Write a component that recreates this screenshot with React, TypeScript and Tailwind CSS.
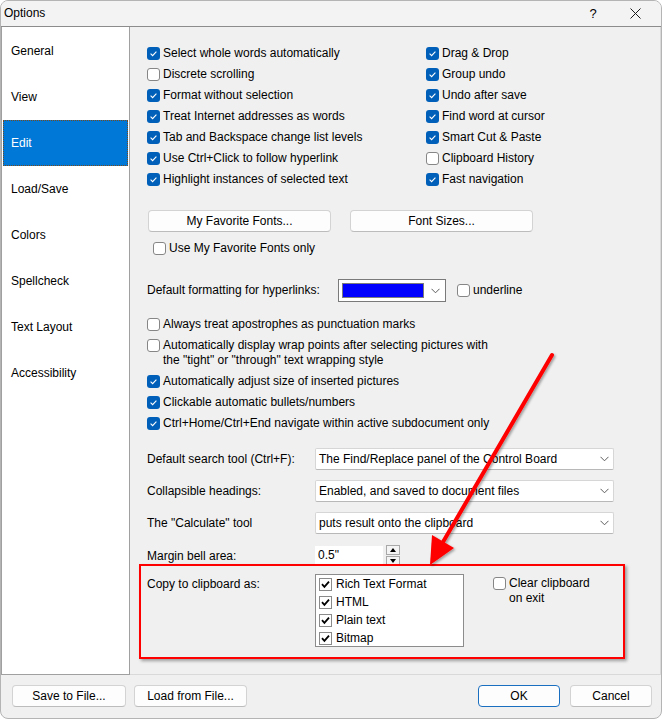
import React from 'react';

const LEFT_OPTS = [
  { label: 'Select whole words automatically', on: true },
  { label: 'Discrete scrolling', on: false },
  { label: 'Format without selection', on: true },
  { label: 'Treat Internet addresses as words', on: true },
  { label: 'Tab and Backspace change list levels', on: true },
  { label: 'Use Ctrl+Click to follow hyperlink', on: true },
  { label: 'Highlight instances of selected text', on: true },
];

const RIGHT_OPTS = [
  { label: 'Drag & Drop', on: true },
  { label: 'Group undo', on: true },
  { label: 'Undo after save', on: true },
  { label: 'Find word at cursor', on: true },
  { label: 'Smart Cut & Paste', on: true },
  { label: 'Clipboard History', on: false },
  { label: 'Fast navigation', on: true },
];

const NAV = ['General', 'View', 'Edit', 'Load/Save', 'Colors', 'Spellcheck', 'Text Layout', 'Accessibility'];

const CLIP_FORMATS = ['Rich Text Format', 'HTML', 'Plain text', 'Bitmap'];

// Windows 11 style checkbox
function Box({ on }: { on: boolean }) {
  if (on) {
    return (
      <span className="w-[13px] h-[13px] rounded-[3px] bg-[#005fb8] flex items-center justify-center shrink-0">
        <svg width="9" height="9" viewBox="0 0 9 9">
          <path d="M1.6 4.7 L3.6 6.6 L7.4 2.6" stroke="white" strokeWidth="1.1" fill="none" />
        </svg>
      </span>
    );
  }
  return <span className="block w-[13px] h-[13px] rounded-[3px] bg-white border border-[#868686] shrink-0" />;
}

// classic checkbox used in the list box
function ClassicBox() {
  return (
    <span className="w-[13px] h-[13px] bg-white border border-[#8a8a8a] flex items-center justify-center shrink-0">
      <svg width="9" height="9" viewBox="0 0 9 9">
        <path d="M1 4.2 L3.4 6.8 L8 1.6" stroke="black" strokeWidth="1.8" fill="none" />
      </svg>
    </span>
  );
}

function Option({ label, on }: { label: string; on: boolean }) {
  return (
    <div className="h-[21px] flex items-center gap-[3px]">
      <Box on={on} />
      <span className="whitespace-nowrap">{label}</span>
    </div>
  );
}

function Chevron() {
  return (
    <svg width="9" height="6" viewBox="0 0 9 6" className="shrink-0">
      <path d="M0.5 0.8 L4.5 4.8 L8.5 0.8" stroke="#5c5c5c" strokeWidth="1" fill="none" />
    </svg>
  );
}

function Combo({ value }: { value: string }) {
  return (
    <div className="w-[299px] h-[22px] bg-white border border-[#d6d6d6] border-b-[#b8b8b8] rounded-[2px] flex items-center pl-[3px] pr-[4px]">
      <span className="flex-1 whitespace-nowrap">{value}</span>
      <Chevron />
    </div>
  );
}

function Btn({ label, w, primary }: { label: string; w: string; primary?: boolean }) {
  return (
    <div
      className={`${w} h-[22px] rounded-[4px] bg-[#fdfdfd] flex items-center justify-center border ${
        primary ? 'border-[#1a6fc0]' : 'border-[#d3d3d3] border-b-[#bcbcbc]'
      }`}
    >
      {label}
    </div>
  );
}

function Arrow() {
  return (
    <svg className="absolute left-0 top-0 pointer-events-none" width="662" height="719" viewBox="0 0 662 719">
      <defs>
        <filter id="sh" x="-20%" y="-20%" width="140%" height="140%">
          <feDropShadow dx="1.5" dy="1.5" stdDeviation="1.2" floodColor="#000" floodOpacity="0.35" />
        </filter>
      </defs>
      <g filter="url(#sh)">
        <line x1="551" y1="354" x2="442" y2="541" stroke="#ff0000" strokeWidth="4" strokeLinecap="round" />
        <polygon points="429,564 453,547 431,534" fill="#ff0000" />
      </g>
    </svg>
  );
}

export default function App() {
  return (
    <div
      className="w-[662px] h-[719px] bg-[#f0f0f0] border border-[#b4b4b4] rounded-[8px] overflow-hidden relative flex flex-col text-[12px] text-black leading-[15px]"
      style={{ fontFamily: '"Liberation Sans", Arial, sans-serif' }}
    >
      {/* Title bar */}
      <div className="h-[26px] shrink-0 flex items-center pl-[3px] border-b border-[#8c8c8c] bg-[#f3f3f3]">
        <span className="flex-1">Options</span>
        <span className="w-[20px] text-center mr-[22px] text-[13px]">?</span>
        <span className="w-[20px] flex justify-center mr-[16px]">
          <svg width="11" height="11" viewBox="0 0 11 11">
            <path d="M0.5 0.5 L10.5 10.5 M10.5 0.5 L0.5 10.5" stroke="#1a1a1a" strokeWidth="1" />
          </svg>
        </span>
      </div>

      {/* Body */}
      <div className="h-[648px] shrink-0 flex">
        {/* Sidebar */}
        <div className="w-[129px] shrink-0 bg-white border-l border-r border-b border-[#a0a0a0] pt-[1px] px-[1px]">
          {NAV.map(n => (
            <div
              key={n}
              className={`h-[46px] flex items-center pl-[8px] ${
                n === 'Edit' ? 'bg-[#0078d7] text-white outline outline-1 outline-dotted outline-[#7a4a1a] -outline-offset-1' : ''
              }`}
            >
              {n}
            </div>
          ))}
        </div>

        {/* Edit page */}
        <div className="flex-1 border-r border-b border-[#d9d9d9] pl-[17px] pt-[16px] flex flex-col">
          <div className="grid grid-cols-[279px_1fr]">
            <div className="flex flex-col">
              {LEFT_OPTS.map(o => (
                <Option key={o.label} {...o} />
              ))}
            </div>
            <div className="flex flex-col">
              {RIGHT_OPTS.map(o => (
                <Option key={o.label} {...o} />
              ))}
            </div>
          </div>

          <div className="flex gap-[19px] mt-[20px] ml-[1px]">
            <Btn label="My Favorite Fonts..." w="w-[183px]" />
            <Btn label="Font Sizes..." w="w-[183px]" />
          </div>
          <div className="h-[20px] mt-[6px] ml-[6px] flex items-center gap-[3px]">
            <Box on={false} />
            <span>Use My Favorite Fonts only</span>
          </div>

          <div className="h-[23px] mt-[21px] flex items-center">
            <span className="w-[191px]">Default formatting for hyperlinks:</span>
            <div className="w-[108px] h-[23px] bg-white border border-[#7a7a7a] flex items-center pl-[3px] pr-[5px] gap-[7px]">
              <span className="w-[82px] h-[15px] bg-[#0000ff] border border-[#7c7c7c]" />
              <Chevron />
            </div>
            <div className="ml-[11px] flex items-center gap-[3px]">
              <Box on={false} />
              <span>underline</span>
            </div>
          </div>

          <div className="mt-[12px] flex flex-col">
            <Option label="Always treat apostrophes as punctuation marks" on={false} />
            <div className="flex gap-[3px] pt-[3px] h-[36px]">
              <div className="mt-[1px]">
                <Box on={false} />
              </div>
              <span>
                Automatically display wrap points after selecting pictures with
                <br />
                the "tight" or "through" text wrapping style
              </span>
            </div>
            <Option label="Automatically adjust size of inserted pictures" on />
            <Option label="Clickable automatic bullets/numbers" on />
            <Option label="Ctrl+Home/Ctrl+End navigate within active subdocument only" on />
          </div>

          <div className="mt-[14px] flex items-center">
            <span className="w-[168px]">Default search tool (Ctrl+F):</span>
            <Combo value="The Find/Replace panel of the Control Board" />
          </div>
          <div className="mt-[10px] flex items-center">
            <span className="w-[168px]">Collapsible headings:</span>
            <Combo value="Enabled, and saved to document files" />
          </div>
          <div className="mt-[10px] flex items-center">
            <span className="w-[168px]">The "Calculate" tool</span>
            <Combo value="puts result onto the clipboard" />
          </div>
          <div className="mt-[11px] flex items-center">
            <span className="w-[168px] mt-[2px]">Margin bell area:</span>
            <div className="w-[68px] h-[20px] bg-white pl-[3px] flex items-center">0.5"</div>
            <div className="ml-[3px] flex flex-col gap-[1px]">
              <div className="w-[14px] h-[10px] border border-[#a8a8a8] bg-[#f4f4f4] flex items-center justify-center">
                <svg width="6" height="4" viewBox="0 0 6 4">
                  <polygon points="0,4 6,4 3,0" fill="#000" />
                </svg>
              </div>
              <div className="w-[14px] h-[10px] border border-[#a8a8a8] bg-[#f4f4f4] flex items-center justify-center">
                <svg width="6" height="4" viewBox="0 0 6 4">
                  <polygon points="0,0 6,0 3,4" fill="#000" />
                </svg>
              </div>
            </div>
          </div>

          {/* Highlighted clipboard group */}
          <div className="shrink-0 -mt-[2px] -ml-[8px] w-[486px] h-[95px] border-2 border-[#ff0000] shadow-[2px_2px_3px_rgba(0,0,0,0.35)] pl-[6px] pt-[8px] flex">
            <span className="w-[168px] mt-[3px]">Copy to clipboard as:</span>
            <div className="w-[149px] h-[73px] bg-white border border-[#8c8c8c] pl-[3px]">
              {CLIP_FORMATS.map(f => (
                <div key={f} className="h-[18px] flex items-center gap-[4px]">
                  <ClassicBox />
                  <span>{f}</span>
                </div>
              ))}
            </div>
            <div className="ml-[29px] mt-[2px] flex gap-[3px]">
              <div className="mt-[1px]">
                <Box on={false} />
              </div>
              <span>
                Clear clipboard
                <br />
                on exit
              </span>
            </div>
          </div>
        </div>
      </div>

      {/* Footer */}
      <div className="flex-1 flex items-start pt-[10px] pl-[11px] pr-[9px]">
        <div className="flex gap-[8px]">
          <Btn label="Save to File..." w="w-[114px]" />
          <Btn label="Load from File..." w="w-[113px]" />
        </div>
        <div className="flex-1" />
        <div className="flex gap-[10px]">
          <Btn label="OK" w="w-[82px]" primary />
          <Btn label="Cancel" w="w-[82px]" />
        </div>
      </div>

      <Arrow />
    </div>
  );
}
